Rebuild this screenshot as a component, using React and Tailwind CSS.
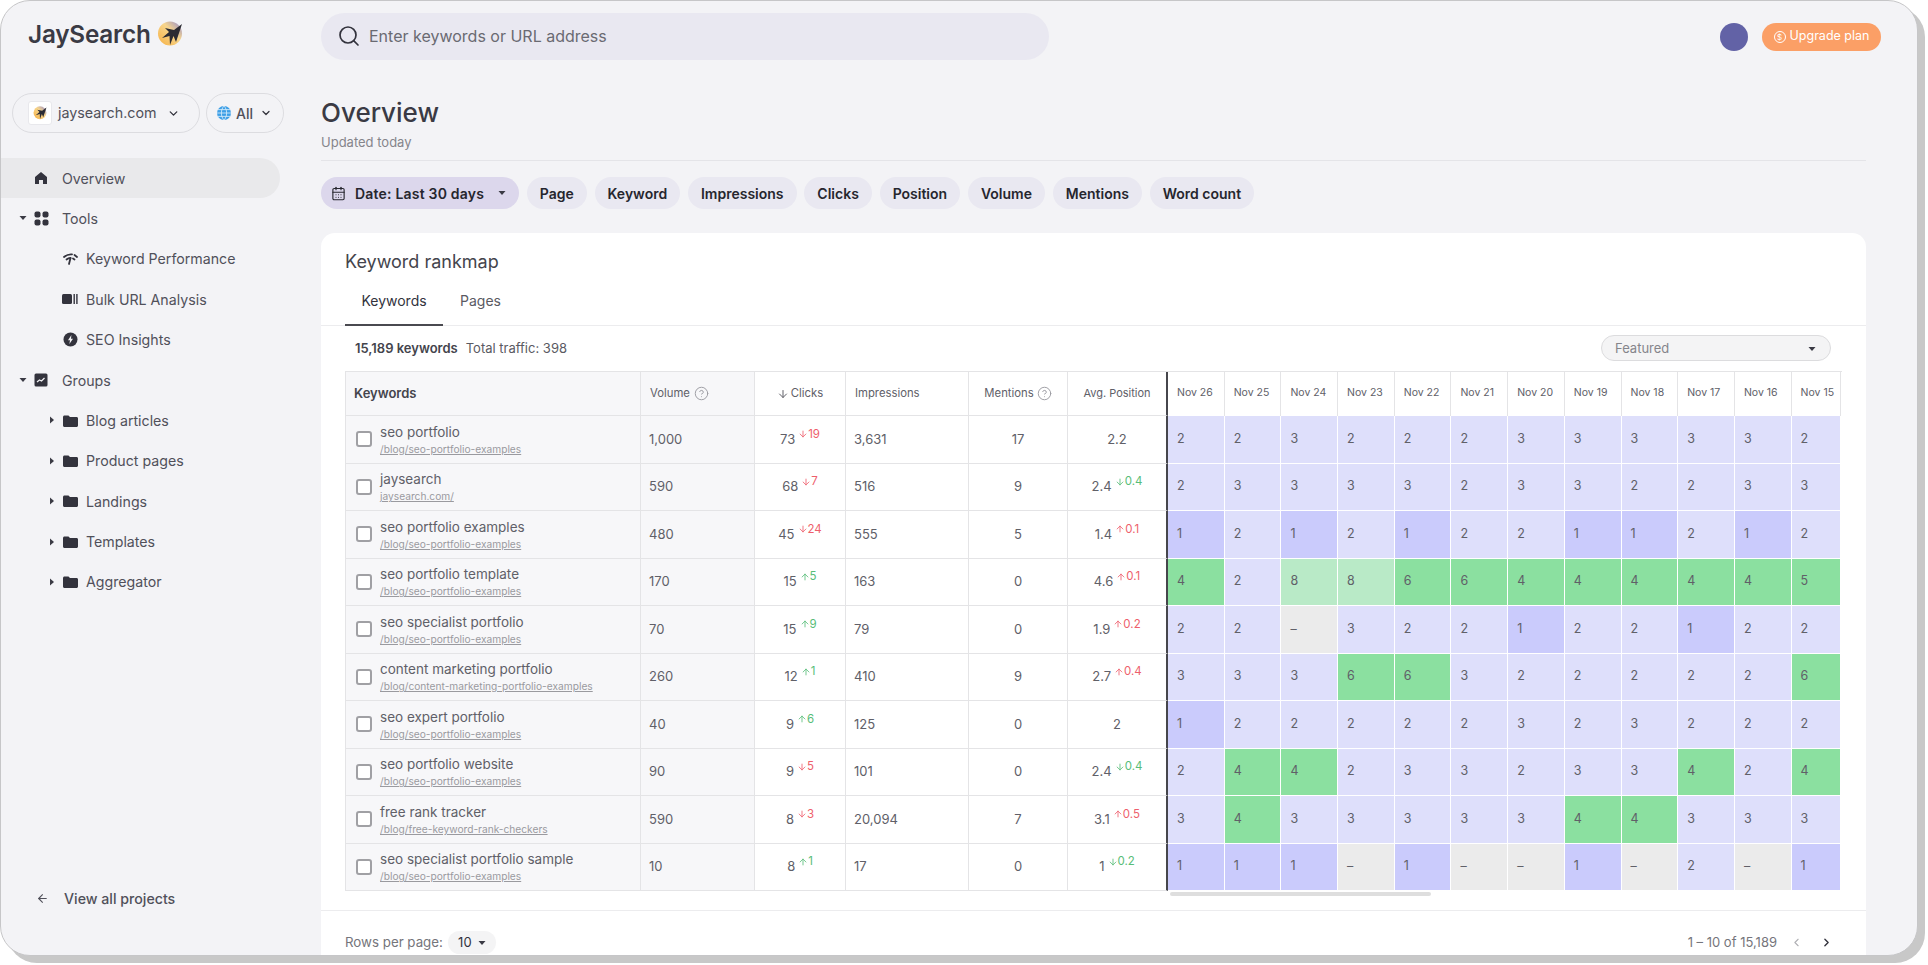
import React from 'react';
import { ArrowDown, ArrowLeft, ArrowUp, CalendarDays, ChevronDown, ChevronLeft, ChevronRight, CircleHelp, Search } from 'lucide-react';

const L = 'bg-[#dedffb]';
const B = 'bg-[#cacbfc]';
const G = 'bg-[#8be0a0]';
const P = 'bg-[#b9eac7]';
const N = 'bg-[#ebebeb]';

const days = ['Nov 26', 'Nov 25', 'Nov 24', 'Nov 23', 'Nov 22', 'Nov 21', 'Nov 20', 'Nov 19', 'Nov 18', 'Nov 17', 'Nov 16', 'Nov 15'];

const rows = [
  { name: 'seo portfolio', url: '/blog/seo-portfolio-examples', volume: '1,000', clicks: '73', cd: 'd19', impressions: '3,631', mentions: '17', pos: '2.2', ranks: '223222333332' },
  { name: 'jaysearch', url: 'jaysearch.com/', volume: '590', clicks: '68', cd: 'd7', impressions: '516', mentions: '9', pos: '2.4', pd: 'g0.4', ranks: '233332332233' },
  { name: 'seo portfolio examples', url: '/blog/seo-portfolio-examples', volume: '480', clicks: '45', cd: 'd24', impressions: '555', mentions: '5', pos: '1.4', pd: 'r0.1', ranks: '121212211212' },
  { name: 'seo portfolio template', url: '/blog/seo-portfolio-examples', volume: '170', clicks: '15', cd: 'u5', impressions: '163', mentions: '0', pos: '4.6', pd: 'r0.1', ranks: '428866444445' },
  { name: 'seo specialist portfolio', url: '/blog/seo-portfolio-examples', volume: '70', clicks: '15', cd: 'u9', impressions: '79', mentions: '0', pos: '1.9', pd: 'r0.2', ranks: '22-322122122' },
  { name: 'content marketing portfolio', url: '/blog/content-marketing-portfolio-examples', volume: '260', clicks: '12', cd: 'u1', impressions: '410', mentions: '9', pos: '2.7', pd: 'r0.4', ranks: '333663222226' },
  { name: 'seo expert portfolio', url: '/blog/seo-portfolio-examples', volume: '40', clicks: '9', cd: 'u6', impressions: '125', mentions: '0', pos: '2', ranks: '122222323222' },
  { name: 'seo portfolio website', url: '/blog/seo-portfolio-examples', volume: '90', clicks: '9', cd: 'd5', impressions: '101', mentions: '0', pos: '2.4', pd: 'g0.4', ranks: '244233233424' },
  { name: 'free rank tracker', url: '/blog/free-keyword-rank-checkers', volume: '590', clicks: '8', cd: 'd3', impressions: '20,094', mentions: '7', pos: '3.1', pd: 'r0.5', ranks: '343333344333' },
  { name: 'seo specialist portfolio sample', url: '/blog/seo-portfolio-examples', volume: '10', clicks: '8', cd: 'u1', impressions: '17', mentions: '0', pos: '1', pd: 'g0.2', ranks: '111-1--1-2-1' },
];

const rankColor = (r) => {
  if (r === '-') return N;
  if (r === '1') return B;
  if (r === '8') return P;
  if (r === '2' || r === '3') return L;
  return G;
};

// d = red down, u = green up, g = green down, r = red up
const Delta = ({ code }) => {
  if (!code) return null;
  const kind = code[0];
  const red = kind === 'd' || kind === 'r';
  const down = kind === 'd' || kind === 'g';
  const Arrow = down ? ArrowDown : ArrowUp;
  return (
    <span className={`ml-[3px] -mt-[10px] flex items-center text-[11.5px] leading-none ${red ? 'text-[#ee5f6c]' : 'text-[#58bd78]'}`}>
      <Arrow size={10} strokeWidth={2} />
      {code.slice(1)}
    </span>
  );
};

const Bird = ({ size, id }) => (
  <svg width={size} height={size} viewBox="0 0 26 26">
    <defs>
      <linearGradient id={id} x1="0.1" y1="0.9" x2="0.9" y2="0.1">
        <stop offset="0" stopColor="#f6b64f" />
        <stop offset="0.6" stopColor="#f7d58c" />
        <stop offset="1" stopColor="#a79bc0" />
      </linearGradient>
    </defs>
    <circle cx="13" cy="12.5" r="12" fill={`url(#${id})`} />
    <path d="M25 3 L19 21 L16.5 15 L13 24 L12.5 15 L5 17 L12 11 L8 7 L17 9 Z" fill="#2b2b33" />
  </svg>
);

const Caret = ({ open }) => (
  <svg width="8" height="8" viewBox="0 0 8 8" className={open ? '' : '-rotate-90'}>
    <path d="M0.5 2 L7.5 2 L4 6 Z" fill="#3a3a44" />
  </svg>
);

const HomeIcon = () => (
  <svg width="14" height="14" viewBox="0 0 14 14"><path d="M7 1 L13 6 V13 H9 V9 H5 V13 H1 V6 Z" fill="#33333d" /></svg>
);
const ToolsIcon = () => (
  <svg width="15" height="15" viewBox="0 0 15 15" fill="#33333d">
    <rect x="0.5" y="0.5" width="6" height="6" rx="2" /><rect x="8.5" y="0.5" width="6" height="6" rx="2" />
    <rect x="0.5" y="8.5" width="6" height="6" rx="2" /><rect x="8.5" y="8.5" width="6" height="6" rx="2" />
  </svg>
);
const SignalIcon = () => (
  <svg width="15" height="12" viewBox="0 0 15 12" fill="none" stroke="#33333d" strokeWidth="1.8" strokeLinecap="round">
    <path d="M1 4 C4 1.5 7 1.2 9 1.4" /><path d="M11.5 2 L14 4" /><path d="M3.5 6.5 C5 5.2 6.5 5 7.5 5" /><path d="M7.5 5 L6 11" /><path d="M10 5.5 L11.5 6.5" />
  </svg>
);
const BulkIcon = () => (
  <svg width="16" height="12" viewBox="0 0 16 12" fill="#33333d">
    <rect x="0" y="1" width="10" height="10" rx="1.5" /><rect x="11.5" y="1" width="1.4" height="10" /><rect x="14.2" y="1" width="1.4" height="10" />
  </svg>
);
const InsightIcon = () => (
  <svg width="15" height="15" viewBox="0 0 15 15"><circle cx="7.5" cy="7.5" r="7" fill="#33333d" /><path d="M8.4 3 L5 8.2 H7 L6.4 12 L10 6.8 H8 Z" fill="#f3f3f6" /></svg>
);
const GroupsIcon = () => (
  <svg width="14" height="14" viewBox="0 0 14 14"><rect width="13" height="13" x="0.5" y="0.5" rx="1.5" fill="#33333d" /><path d="M3 9 L5.5 7 L7.5 8 L10.5 5" stroke="#f3f3f6" strokeWidth="1.3" fill="none" /></svg>
);
const FolderIcon = () => (
  <svg width="15" height="12" viewBox="0 0 15 12"><path d="M1.5 0.5 H5.5 L7 2 H13.5 C14.3 2 15 2.6 15 3.4 V10.5 C15 11.3 14.3 12 13.5 12 H1.5 C0.7 12 0 11.3 0 10.5 V2 C0 1.2 0.7 0.5 1.5 0.5 Z" fill="#33333d" /></svg>
);
const GlobeIcon = () => (
  <svg width="14" height="14" viewBox="0 0 14 14" fill="none">
    <circle cx="7" cy="7" r="7" fill="#3e9fe6" />
    <path d="M0 7 H14 M1 3.6 H13 M1 10.4 H13 M7 0 C3.5 3.5 3.5 10.5 7 14 M7 0 C10.5 3.5 10.5 10.5 7 14" stroke="#dff0fb" strokeWidth="0.8" />
  </svg>
);

const NavItem = ({ icon, caret, children, active, sub }) => (
  <div className={`relative flex h-[40.4px] items-center ${active ? 'w-[279px] rounded-r-[20px] bg-[#e9e9eb]' : ''}`}>
    {caret !== undefined && (
      <span className={`absolute top-[16px] ${sub ? 'left-[47px]' : 'left-[18px]'}`}><Caret open={caret} /></span>
    )}
    <span className={`flex w-[16px] items-center justify-center ${sub ? 'ml-[61px]' : 'ml-[32px]'}`}>{icon}</span>
    <span className={`text-[14.2px] text-[#50505a] ${sub ? 'ml-[8px]' : 'ml-[13px]'}`}>{children}</span>
  </div>
);

const Sidebar = () => (
  <aside className="flex w-[320px] shrink-0 flex-col">
    <div className="mt-[18px] ml-[27px] flex h-[30px] items-center">
      <span className="text-[24.3px] font-semibold leading-none tracking-[-0.2px] text-[#3a3a44]">JaySearch</span>
      <span className="ml-[6px]"><Bird size={26} id="logo-blob" /></span>
    </div>
    <div className="mt-[44px] ml-[11px] flex gap-[6px]">
      <div className="flex h-[40px] w-[188px] items-center rounded-full border border-[#dcdce0]">
        <span className="ml-[15px] flex h-[24px] w-[24px] items-center justify-center rounded-[3px] border border-[#e8e8ec] bg-white"><Bird size={14} id="site-blob" /></span>
        <span className="ml-[6px] text-[14.3px] text-[#50505a]">jaysearch.com</span>
        <ChevronDown size={13} strokeWidth={2.5} className="ml-auto mr-[19px] text-[#33333d]" />
      </div>
      <div className="flex h-[40px] w-[78px] items-center rounded-full border border-[#dcdce0]">
        <span className="ml-[10px]"><GlobeIcon /></span>
        <span className="ml-[5px] text-[14px] font-medium text-[#50505a]">All</span>
        <ChevronDown size={12} strokeWidth={2.5} className="ml-[7px] text-[#33333d]" />
      </div>
    </div>
    <nav className="mt-[25px]">
      <NavItem active icon={<HomeIcon />}>Overview</NavItem>
      <NavItem caret icon={<ToolsIcon />}>Tools</NavItem>
      <NavItem sub icon={<SignalIcon />}>Keyword Performance</NavItem>
      <NavItem sub icon={<BulkIcon />}>Bulk URL Analysis</NavItem>
      <NavItem sub icon={<InsightIcon />}>SEO Insights</NavItem>
      <NavItem caret icon={<GroupsIcon />}>Groups</NavItem>
      {['Blog articles', 'Product pages', 'Landings', 'Templates', 'Aggregator'].map((g) => (
        <NavItem key={g} sub caret={false} icon={<FolderIcon />}>{g}</NavItem>
      ))}
    </nav>
    <div className="mt-auto mb-[46px] ml-[35px] flex items-center">
      <ArrowLeft size={13} strokeWidth={2} className="text-[#50505a]" />
      <span className="ml-[15px] text-[14.2px] font-medium text-[#50505a]">View all projects</span>
    </div>
  </aside>
);

const Chip = ({ children }) => (
  <div className="flex h-[32px] items-center rounded-full bg-[#e9e8f1] px-[13px] text-[14px] font-semibold text-[#26262e]">{children}</div>
);

const Table = () => (
  <div className="mx-[24px] mt-[10px] grid grid-cols-[296px_114px_91px_123px_99px_100px_repeat(11,56.7px)_49px] grid-rows-[44px_repeat(10,47.5px)] border-t border-[#e4e4e6] text-[13px] text-[#606068]">
    <div className="flex items-center border-x border-b border-[#e4e4e6] bg-[#f7f7f9] pl-[8px] font-semibold text-[#44444c]">Keywords</div>
    <div className="flex items-center border-r border-b border-[#e4e4e6] bg-[#f7f7f9] pl-[9px] text-[11.3px]">
      Volume<CircleHelp size={15} strokeWidth={1.5} className="ml-[4px] text-[#9a9aa0]" />
    </div>
    <div className="flex items-center justify-center border-r border-b border-[#e4e4e6] text-[11.3px]"><ArrowDown size={12} className="mr-[2px]" />Clicks</div>
    <div className="flex items-center border-r border-b border-[#e4e4e6] pl-[9px] text-[11.3px]">Impressions</div>
    <div className="flex items-center justify-center border-r border-b border-[#e4e4e6] text-[11.3px]">
      Mentions<CircleHelp size={15} strokeWidth={1.5} className="ml-[3px] text-[#9a9aa0]" />
    </div>
    <div className="flex items-center justify-center border-r-2 border-b border-r-[#46464c] border-b-[#e4e4e6] text-[11px]">Avg. Position</div>
    {days.map((d) => (
      <div key={d} className="flex items-center border-r border-[#e4e4e6] pb-[2px] pl-[9px] text-[10.5px]">{d}</div>
    ))}
    {rows.map((r) => (
      <React.Fragment key={r.name}>
        <div className="flex items-center border-x border-b border-[#e4e4e6] bg-[#f7f7f9] pl-[10px]">
          <span className="h-[16px] w-[16px] shrink-0 rounded-[3px] border-2 border-[#a0a0a4] bg-white" />
          <div className="ml-[8px] min-w-0">
            <div className="text-[13.5px] leading-[16px] text-[#606068]">{r.name}</div>
            <div className="mt-[3px] text-[10.2px] leading-[12px] text-[#9a9a9f] underline">{r.url}</div>
          </div>
        </div>
        <div className="flex items-center border-r border-b border-[#e4e4e6] bg-[#f7f7f9] pl-[8px]">{r.volume}</div>
        <div className="flex items-center justify-center border-r border-b border-[#e4e4e6]">{r.clicks}<Delta code={r.cd} /></div>
        <div className="flex items-center border-r border-b border-[#e4e4e6] pl-[8px]">{r.impressions}</div>
        <div className="flex items-center justify-center border-r border-b border-[#e4e4e6]">{r.mentions}</div>
        <div className="flex items-center justify-center border-r-2 border-b border-r-[#46464c] border-b-[#e4e4e6]">{r.pos}<Delta code={r.pd} /></div>
        {r.ranks.split('').map((v, i) => (
          <div key={i} className={`flex items-center border-r border-b border-white pl-[9px] text-[12.5px] ${rankColor(v)}`}>{v === '-' ? '–' : v}</div>
        ))}
      </React.Fragment>
    ))}
  </div>
);

const Card = () => (
  <section className="mt-[24px] flex flex-1 flex-col rounded-t-[14px] bg-white">
    <h2 className="mt-[16px] ml-[24px] text-[18px] leading-[26px] text-[#44444c]">Keyword rankmap</h2>
    <div className="mt-[1px] flex h-[50px] border-b border-[#ececee] pl-[24px]">
      <div className="flex h-[50px] w-[98px] items-center justify-center border-b-2 border-[#4a4a50] text-[14px] text-[#33333d]">Keywords</div>
      <div className="ml-[17px] flex items-center text-[14px] text-[#5a5a62]">Pages</div>
    </div>
    <div className="mt-[9px] flex h-[26px] items-center pr-[35px] pl-[34px]">
      <span className="pt-[2px] text-[13px] font-semibold text-[#44444c]">15,189 keywords</span>
      <span className="ml-[8px] pt-[2px] text-[13px] text-[#5a5a62]">Total traffic: 398</span>
      <div className="ml-auto flex h-[26px] w-[230px] items-center rounded-full border border-[#dcdcde] bg-[#f4f4f5] pt-[1px] pr-[14px] pl-[13px] text-[13px] text-[#85858b]">
        Featured
        <span className="ml-auto"><Caret open /></span>
      </div>
    </div>
    <Table />
    <div className="mt-[1px] ml-[849px] h-[4px] w-[261px] rounded-full bg-[#dedede]" />
    <div className="mt-[14px] flex flex-1 items-center border-t border-[#ececee] pt-[19px] pr-[33px] pl-[24px]">
      <span className="text-[13.3px] text-[#75757b]">Rows per page:</span>
      <div className="ml-[5px] flex h-[23px] w-[48px] items-center justify-center gap-[6px] rounded-full bg-[#f4f4f5] text-[13px] text-[#33333d]">10<Caret open /></div>
      <span className="ml-auto text-[13px] text-[#75757b]">1 – 10 of 15,189</span>
      <ChevronLeft size={13} strokeWidth={2} className="ml-[13px] text-[#b0b0b4]" />
      <ChevronRight size={13} strokeWidth={2.5} className="ml-[17px] text-[#33333d]" />
    </div>
  </section>
);

export default function App() {
  return (
    <div className="h-[965px] w-[1928px] overflow-hidden bg-white font-['Inter',sans-serif]">
      <div className="flex h-[956px] w-[1918px] overflow-hidden rounded-[30px] border border-[#c6c6c8] bg-[#f3f3f6] shadow-[7px_7px_0_#c8c8c8]">
        <Sidebar />
        <main className="flex min-w-0 flex-1 flex-col pt-[12px] pr-[51px]">
          <div className="flex items-center">
            <div className="flex h-[47px] w-[728px] items-center rounded-full bg-[#e9e8f1] pb-[1px] pl-[16px] text-[16px] text-[#6a6a72]">
              <Search size={24} strokeWidth={1.7} className="text-[#33333d]" />
              <span className="ml-[8px]">Enter keywords or URL address</span>
            </div>
            <span className="ml-auto h-[28px] w-[28px] rounded-full bg-[#6262a6]" />
            <div className="-mr-[15px] ml-[14px] flex h-[28px] w-[119px] items-center justify-center rounded-full bg-[#fb9f66] text-[12.5px] text-white">
              <span className="mr-[4px] flex h-[12px] w-[12px] items-center justify-center rounded-full border border-white text-[8px]">$</span>
              Upgrade plan
            </div>
          </div>
          <h1 className="mt-[37px] text-[26px] leading-[32px] font-medium text-[#3a3a44]">Overview</h1>
          <p className="mt-[4px] text-[13px] leading-[18px] text-[#85858b]">Updated today</p>
          <div className="mt-[9px] border-t border-[#e4e4e8]" />
          <div className="mt-[16px] flex gap-[7.8px]">
            <div className="flex h-[32px] w-[198px] items-center rounded-full bg-[#dcd7ec] pl-[10px] text-[14px] font-semibold tracking-[0.2px] text-[#26262e]">
              <CalendarDays size={15} strokeWidth={1.8} />
              <span className="ml-[9px]">Date: Last 30 days</span>
              <span className="ml-auto mr-[13px]"><Caret open /></span>
            </div>
            {['Page', 'Keyword', 'Impressions', 'Clicks', 'Position', 'Volume', 'Mentions', 'Word count'].map((c) => (
              <Chip key={c}>{c}</Chip>
            ))}
          </div>
          <Card />
        </main>
      </div>
    </div>
  );
}
